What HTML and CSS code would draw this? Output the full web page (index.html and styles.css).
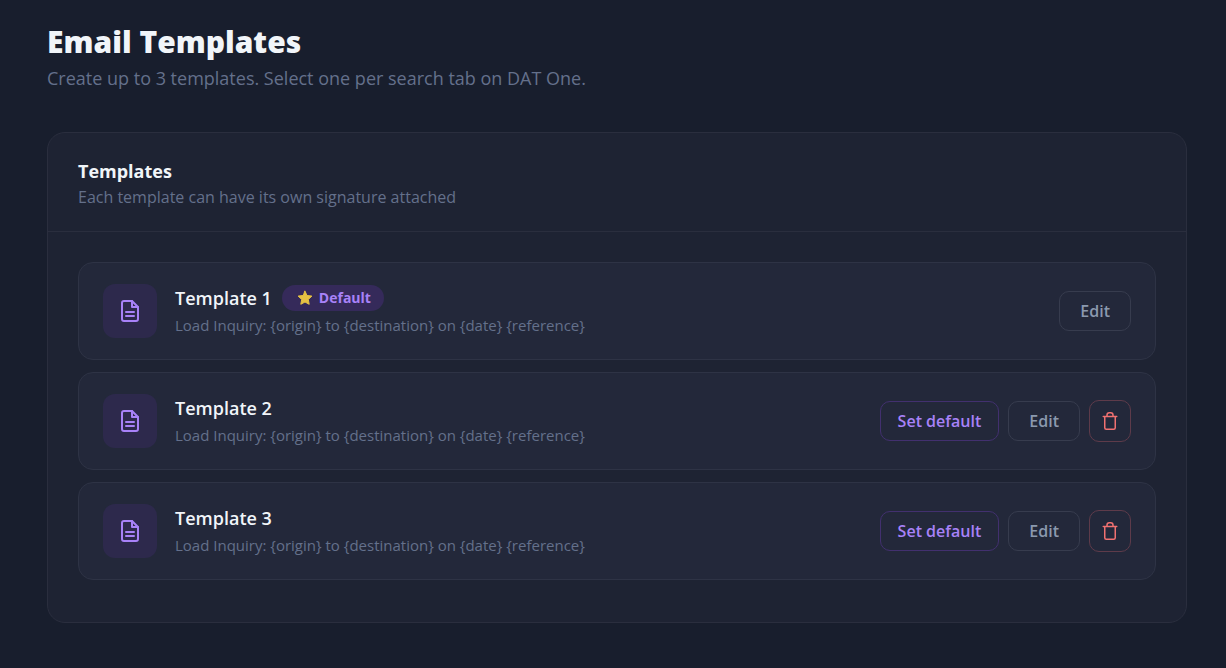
FILE: index.html
```html
<!DOCTYPE html>
<html lang="en">
<head>
  <meta charset="UTF-8">
  <meta name="viewport" content="width=device-width, initial-scale=1">
  <title>Email Templates</title>
  <link rel="stylesheet" href="styles.css">
</head>
<body>
  <!-- Shared icons -->
  <svg class="icon-defs" aria-hidden="true">
    <symbol id="icon-file" viewBox="0 0 24 24">
      <path d="M14 2H6a2 2 0 0 0-2 2v16a2 2 0 0 0 2 2h12a2 2 0 0 0 2-2V8z"/>
      <path d="M14 2v6h6M8 13h8M8 17h8"/>
    </symbol>
    <symbol id="icon-trash" viewBox="0 0 24 24">
      <path d="M3 6h18M5 6v15a2 2 0 0 0 2 2h10a2 2 0 0 0 2-2V6M8 6V4a3 3 0 0 1 3-3h2a3 3 0 0 1 3 3v2"/>
    </symbol>
  </svg>

  <main class="page">
    <header class="page-header">
      <h1>Email Templates</h1>
      <p>Create up to 3 templates. Select one per search tab on DAT One.</p>
    </header>

    <section class="card">
      <div class="card-header">
        <h2>Templates</h2>
        <p>Each template can have its own signature attached</p>
      </div>
      <div class="card-body">
        <!-- Template 1 -->
        <article class="template">
          <div class="template-icon"><svg><use href="#icon-file"/></svg></div>
          <div class="template-info">
            <div class="template-title">
              <h3>Template 1</h3>
              <span class="badge">
                <svg class="star" viewBox="0 0 16 16"><path d="M8 1.2l2 4.3 4.9.6-3.6 3.3.9 4.9L8 12l-4.2 2.3.9-4.9L1.1 6.1 6 5.5z"/></svg>
                Default
              </span>
            </div>
            <p>Load Inquiry: {origin} to {destination} on {date} {reference}</p>
          </div>
          <div class="template-actions">
            <button type="button" class="btn">Edit</button>
          </div>
        </article>
        <!-- Template 2 -->
        <article class="template">
          <div class="template-icon"><svg><use href="#icon-file"/></svg></div>
          <div class="template-info">
            <div class="template-title">
              <h3>Template 2</h3>
            </div>
            <p>Load Inquiry: {origin} to {destination} on {date} {reference}</p>
          </div>
          <div class="template-actions">
            <button type="button" class="btn btn-default">Set default</button>
            <button type="button" class="btn">Edit</button>
            <button type="button" class="btn btn-delete" aria-label="Delete"><svg><use href="#icon-trash"/></svg></button>
          </div>
        </article>
        <!-- Template 3 -->
        <article class="template">
          <div class="template-icon"><svg><use href="#icon-file"/></svg></div>
          <div class="template-info">
            <div class="template-title">
              <h3>Template 3</h3>
            </div>
            <p>Load Inquiry: {origin} to {destination} on {date} {reference}</p>
          </div>
          <div class="template-actions">
            <button type="button" class="btn btn-default">Set default</button>
            <button type="button" class="btn">Edit</button>
            <button type="button" class="btn btn-delete" aria-label="Delete"><svg><use href="#icon-trash"/></svg></button>
          </div>
        </article>
      </div>
    </section>
  </main>
</body>
</html>
```
FILE: styles.css
```css
* {
  box-sizing: border-box;
}
body {
  font-family: "Open Sans", "Noto Sans", sans-serif;
  background: #181e2d;
  color: #f1f5f9;
  margin: 0;
}
h1, h2, h3, p {
  margin: 0;
}
.icon-defs {
  display: none;
}
svg {
  fill: none;
  stroke: currentColor;
  stroke-width: 2;
  stroke-linecap: round;
  stroke-linejoin: round;
}
.page {
  padding: 22px 39px 44px 47px;
}
/* Page header */
.page-header {
  margin-bottom: 40px;
}
.page-header h1 {
  margin-bottom: 2px;
  font-size: 30px;
  font-weight: 800;
  line-height: 40px;
}
.page-header p {
  font-size: 18px;
  line-height: 28px;
  color: #64708b;
}
/* Card */
.card {
  background: #1e2333;
  border: 1px solid #2a2e3e;
  border-radius: 18px;
}
.card-header {
  padding: 24px 30px 22px;
  border-bottom: 1px solid #2a2e3e;
}
.card-header h2 {
  font-size: 18px;
  font-weight: 700;
  line-height: 28px;
}
.card-header p,
.template-info p {
  font-size: 16px;
  line-height: 24px;
  color: #64708b;
}
.template-info p {
  font-size: 15px;
  line-height: 26px;
}
.card-body {
  display: flex;
  flex-direction: column;
  gap: 12px;
  padding: 30px 30px 42px;
}
/* Template rows */
.template {
  display: flex;
  align-items: center;
  gap: 18px;
  min-height: 98px;
  padding: 20px 24px;
  background: #23283a;
  border: 1px solid #2e3345;
  border-radius: 15px;
}
.template-icon {
  display: flex;
  align-items: center;
  justify-content: center;
  width: 54px;
  height: 54px;
  background: #2d294c;
  border-radius: 12px;
  color: #a882f8;
}
.template-icon svg {
  width: 24px;
  height: 24px;
}
.template-info {
  flex: 1;
}
.template-title {
  display: flex;
  align-items: center;
  gap: 10px;
}
.template-title h3 {
  font-size: 18px;
  font-weight: 600;
  line-height: 28px;
}
.badge {
  display: flex;
  align-items: center;
  gap: 6px;
  padding: 2px 13px 2px 15px;
  font-size: 14px;
  font-weight: 700;
  line-height: 22px;
  color: #a882f8;
  background: #352a5a;
  border-radius: 13px;
}
.star {
  width: 16px;
  height: 16px;
  fill: #e6c243;
  stroke: #e6c243;
  stroke-width: 1;
}
/* Buttons */
.template-actions {
  display: flex;
  align-items: center;
  gap: 9px;
}
.btn {
  padding: 7px 20px;
  font-family: inherit;
  font-size: 16px;
  font-weight: 600;
  line-height: 24px;
  color: #8b99ae;
  background: transparent;
  border: 1px solid #373c4e;
  border-radius: 10px;
  cursor: pointer;
}
.btn:hover {
  background: #2a2f42;
}
.btn-default {
  padding: 7px 17px;
  color: #a882f8;
  border-color: #42306f;
}
.btn-delete {
  display: flex;
  align-items: center;
  justify-content: center;
  width: 42px;
  height: 42px;
  padding: 0;
  color: #f07171;
  border-color: #5e3b4a;
}
.btn-delete svg {
  width: 18px;
  height: 18px;
}
```
